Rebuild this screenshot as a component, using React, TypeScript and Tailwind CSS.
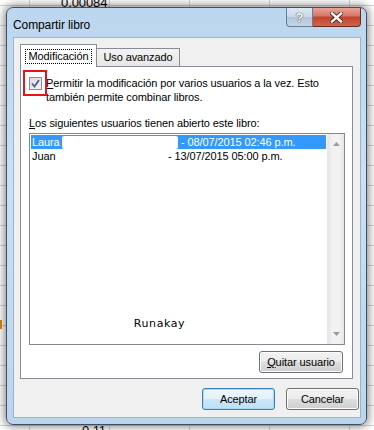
import React from "react";

const ui = "font-['Segoe_UI','Liberation_Sans',sans-serif]";

const Btn = ({
	children,
	className = "",
	focused = false,
}: {
	children: React.ReactNode;
	className?: string;
	focused?: boolean;
}) => (
	<div
		className={`flex items-center justify-center rounded-[3px] border text-[11px] text-black ${
			focused
				? "border-[#3c7fb1] bg-[linear-gradient(#eef7fd_0%,#e2f1fb_50%,#cbe6f8_51%,#bfe0f5_100%)] shadow-[inset_0_0_0_1px_#a6d8f7]"
				: "border-[#707070] bg-[linear-gradient(#f2f2f2_0%,#ebebeb_50%,#dddddd_51%,#cfcfcf_100%)] shadow-[inset_0_0_0_1px_#fcfcfc]"
		} ${className}`}
	>
		{children}
	</div>
);

export default function App() {
	return (
		<div
			className={`relative h-[430px] w-[374px] overflow-hidden bg-white tracking-[-0.1px] ${ui} bg-[linear-gradient(90deg,transparent_29px,#d4d4d4_29px,#d4d4d4_30px,transparent_30px),linear-gradient(transparent_19px,#d4d4d4_19px)] bg-[length:80px_20px,80px_20px] bg-[position:0_0,0_6px]`}
		>
			{/* spreadsheet behind */}
			<span className="absolute left-[61px] top-[-7px] text-[13px] text-black">0.00084</span>
			<span className="absolute left-[82px] top-[421px] text-[13px] text-black">0.11</span>
			<div className="absolute left-0 top-[320px] h-[9px] w-[2px] bg-[#d98a1c]" />

			{/* window */}
			<div className="absolute left-[6px] top-[7px] flex h-[418px] w-[361px] flex-col rounded-[7px] border border-[#3d4f63] bg-[linear-gradient(180deg,#bcd6ef_0%,#c9e0f5_40%,#bcd5ee_100%)] shadow-[0_0_8px_2px_rgba(0,0,0,0.45)]">
				{/* title bar */}
				<div className="relative flex h-[29px] shrink-0 items-center pl-[6px]">
					<span className="mt-[4px] text-[12px] text-black">Compartir libro</span>
					<div className="absolute right-[5px] top-0 flex h-[19px]">
						<div className="flex w-[27px] items-center justify-center rounded-bl-[4px] border border-t-0 border-[#6a7d92] bg-[linear-gradient(#dbe7f3_0%,#c9d8e8_50%,#b3c6da_51%,#c3d4e6_100%)]">
							<span className="text-[13px] font-bold leading-none text-white [text-shadow:0_0_1px_#333,0_0_1px_#333]">?</span>
						</div>
						<div className="flex w-[48px] items-center justify-center rounded-br-[4px] border border-l-0 border-t-0 border-[#6b2a20] bg-[linear-gradient(#e8a293_0%,#d9756a_45%,#c2422c_50%,#d0654a_100%)]">
							<svg width="13" height="11" viewBox="0 0 13 11">
								<path d="M2 1.5 L11 9.5 M11 1.5 L2 9.5" stroke="#4a1a12" strokeWidth="4" strokeLinecap="square" />
								<path d="M2 1.5 L11 9.5 M11 1.5 L2 9.5" stroke="#ffffff" strokeWidth="2.4" strokeLinecap="square" />
							</svg>
						</div>
					</div>
				</div>

				{/* client area */}
				<div className="mb-[6px] ml-[6px] mr-[5px] flex flex-1 flex-col border border-[#9fb3c8] bg-[#f0f0f0] pl-[6px] pt-[6px] text-[11px]">
					{/* tabs */}
					<div className="flex h-[22px] items-end">
						<div className="relative z-10 -mb-px flex h-[23px] w-[77px] items-start justify-center border border-b-0 border-[#898c95] bg-white pt-[4px]">
							<span className="border border-dotted border-black px-[3px] leading-[13px]">Modificación</span>
						</div>
						<div className="flex h-[18px] w-[83px] items-center justify-center border border-b-0 border-l-0 border-[#898c95] bg-[linear-gradient(#f3f3f3,#e6e6e6)]">
							Uso avanzado
						</div>
					</div>

					{/* panel */}
					<div className="flex h-[313px] w-[333px] flex-col border border-[#898c95] bg-white pl-[8px]">
						<div className="relative mt-[10px] flex">
							<div className="absolute left-[-6px] top-[-7px] h-[26px] w-[24px] border-2 border-[#e8141a]" />
							<div className="flex h-[13px] w-[13px] shrink-0 items-center justify-center border border-[#8f8f8f] bg-[linear-gradient(135deg,#dcdcdc,#f4f4f4)]">
								<svg width="9" height="9" viewBox="0 0 9 9">
									<path d="M1 4.5 L3.5 7.5 L8 1" fill="none" stroke="#4a5f97" strokeWidth="1.8" />
								</svg>
							</div>
							<p className="ml-[4px] mt-[-1px] w-[280px] leading-[14px]">
								<span className="underline">P</span>ermitir la modificación por varios usuarios a la vez. Esto también permite combinar libros.
							</p>
						</div>

						<p className="mt-[12px] leading-[15px]">
							<span className="underline">L</span>os siguientes usuarios tienen abierto este libro:
						</p>

						{/* list */}
						<div className="mt-[2px] flex h-[212px] w-[316px] border border-[#828790] bg-white">
							<div className="flex flex-1 flex-col p-[1px] leading-[13px]">
								<div className="flex h-[14px] items-center bg-[#3399ff] pl-[1px] text-white">
									<span className="w-[30px]">Laura</span>
									<span className="h-[13px] w-[116px] rounded-[2px] bg-white" />
									<span className="ml-[3px]">- 08/07/2015 02:46 p.m.</span>
								</div>
								<div className="flex h-[14px] items-center pl-[1px]">
									<span className="w-[136px]">Juan</span>
									<span>- 13/07/2015 05:00 p.m.</span>
								</div>
								<div className="mt-auto mb-[13px] flex justify-center pr-[38px] font-['DejaVu_Sans',sans-serif] text-[11px] tracking-[0.6px]">
									Runakay
								</div>
							</div>
							<div className="flex w-[17px] flex-col items-center justify-between border-l border-[#e8e8e8] bg-[linear-gradient(90deg,#e6e6e6,#f2f2f2_30%,#f2f2f2_70%,#e6e6e6)] py-[8px]">
								<svg width="7" height="4" viewBox="0 0 7 4"><path d="M0 4 L3.5 0 L7 4Z" fill="#9a9a9a" /></svg>
								<svg width="7" height="4" viewBox="0 0 7 4"><path d="M0 0 L3.5 4 L7 0Z" fill="#9a9a9a" /></svg>
							</div>
						</div>

						<div className="mt-[6px] flex w-[316px] justify-end pr-[2px]">
							<Btn className="h-[22px] w-[84px]">
								<span><span className="underline">Q</span>uitar usuario</span>
							</Btn>
						</div>
					</div>

					{/* dialog buttons */}
					<div className="mt-[9px] flex w-[339px] justify-end gap-[11px]">
						<Btn focused className="h-[22px] w-[73px]">Aceptar</Btn>
						<Btn className="h-[22px] w-[73px]">Cancelar</Btn>
					</div>
				</div>
			</div>
		</div>
	);
}
